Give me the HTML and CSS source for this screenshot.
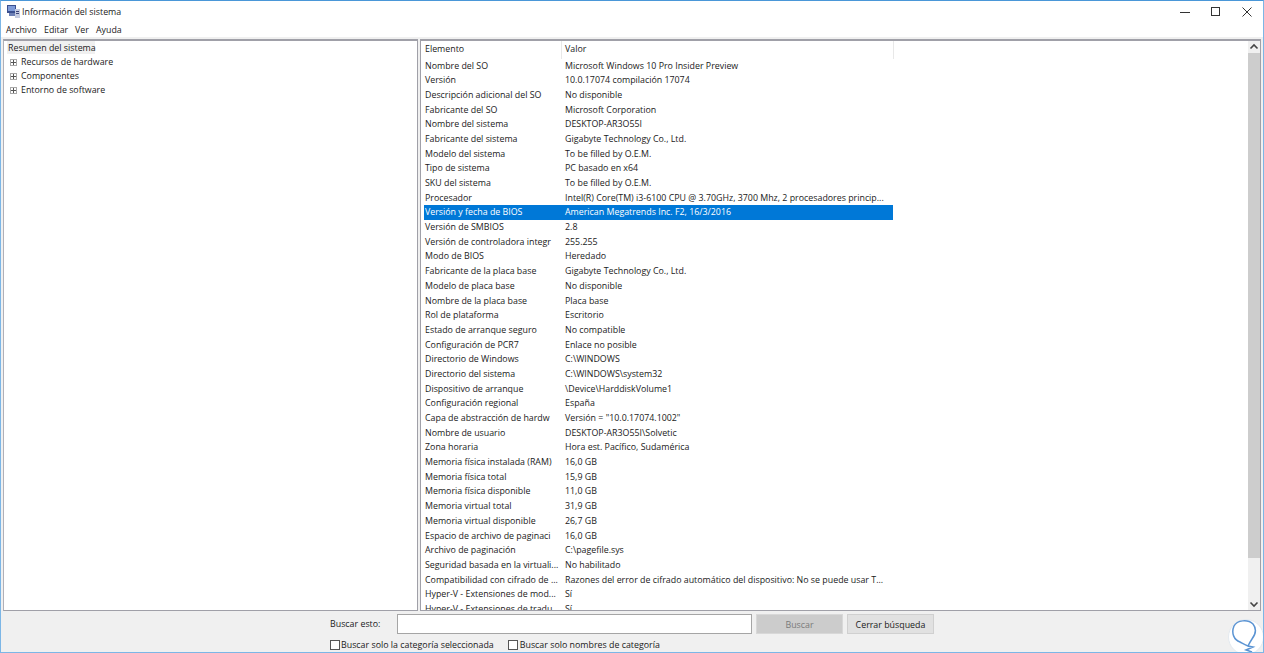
FILE: index.html
```html
<!DOCTYPE html>
<html lang="es">
<head>
<meta charset="utf-8">
<title>Información del sistema</title>
<link rel="stylesheet" href="styles.css">
</head>
<body>
<div class="window">
  <header class="titlebar">
    <svg class="appicon" width="16" height="16" viewBox="0 0 16 16"><rect x="1" y="1" width="9" height="8" fill="#3a4f8f"/><rect x="2" y="2" width="7" height="5" fill="#7f9bd8"/><rect x="3" y="9" width="10" height="3" fill="#6c7fb5"/><path d="M9 5h5v9H9z" fill="#c4cbe0"/><path d="M10 7h3v1h-3zM10 9h3v1h-3z" fill="#39427a"/></svg>
    <span class="title">Información del sistema</span>
    <div class="controls">
      <svg width="10" height="10" viewBox="0 0 10 10"><path d="M0 5.5h10" stroke="#333" fill="none"/></svg>
      <svg width="10" height="10" viewBox="0 0 10 10"><rect x=".5" y=".5" width="8" height="8" stroke="#333" stroke-width="1" fill="none"/></svg>
      <svg width="10" height="10" viewBox="0 0 10 10"><path d="M.5.5l9 9M9.5.5l-9 9" stroke="#333" fill="none"/></svg>
    </div>
  </header>
  <nav class="menubar"><span class="m1">Archivo</span><span class="m2">Editar</span><span class="m3">Ver</span><span>Ayuda</span></nav>
  <main class="panes">
    <section class="tree">
      <div class="tree-root">Resumen del sistema</div>
      <div class="tree-item"><span class="plus"></span>Recursos de hardware</div>
      <div class="tree-item"><span class="plus"></span>Componentes</div>
      <div class="tree-item"><span class="plus"></span>Entorno de software</div>
    </section>
    <section class="details">
      <div class="list">
        <div class="head"><div class="c1">Elemento</div><div class="c2">Valor</div></div>
        <div class="rows" id="rows">
          <div class="row"><div class="c1">Nombre del SO</div><div class="c2">Microsoft Windows 10 Pro Insider Preview</div></div>
          <div class="row"><div class="c1">Versión</div><div class="c2">10.0.17074 compilación 17074</div></div>
          <div class="row"><div class="c1">Descripción adicional del SO</div><div class="c2">No disponible</div></div>
          <div class="row"><div class="c1">Fabricante del SO</div><div class="c2">Microsoft Corporation</div></div>
          <div class="row"><div class="c1">Nombre del sistema</div><div class="c2">DESKTOP-AR3O55I</div></div>
          <div class="row"><div class="c1">Fabricante del sistema</div><div class="c2">Gigabyte Technology Co., Ltd.</div></div>
          <div class="row"><div class="c1">Modelo del sistema</div><div class="c2">To be filled by O.E.M.</div></div>
          <div class="row"><div class="c1">Tipo de sistema</div><div class="c2">PC basado en x64</div></div>
          <div class="row"><div class="c1">SKU del sistema</div><div class="c2">To be filled by O.E.M.</div></div>
          <div class="row"><div class="c1">Procesador</div><div class="c2">Intel(R) Core(TM) i3-6100 CPU @ 3.70GHz, 3700 Mhz, 2 procesadores princip...</div></div>
          <div class="row selected"><div class="c1">Versión y fecha de BIOS</div><div class="c2">American Megatrends Inc. F2, 16/3/2016</div></div>
          <div class="row"><div class="c1">Versión de SMBIOS</div><div class="c2">2.8</div></div>
          <div class="row"><div class="c1">Versión de controladora integr</div><div class="c2">255.255</div></div>
          <div class="row"><div class="c1">Modo de BIOS</div><div class="c2">Heredado</div></div>
          <div class="row"><div class="c1">Fabricante de la placa base</div><div class="c2">Gigabyte Technology Co., Ltd.</div></div>
          <div class="row"><div class="c1">Modelo de placa base</div><div class="c2">No disponible</div></div>
          <div class="row"><div class="c1">Nombre de la placa base</div><div class="c2">Placa base</div></div>
          <div class="row"><div class="c1">Rol de plataforma</div><div class="c2">Escritorio</div></div>
          <div class="row"><div class="c1">Estado de arranque seguro</div><div class="c2">No compatible</div></div>
          <div class="row"><div class="c1">Configuración de PCR7</div><div class="c2">Enlace no posible</div></div>
          <div class="row"><div class="c1">Directorio de Windows</div><div class="c2">C:\WINDOWS</div></div>
          <div class="row"><div class="c1">Directorio del sistema</div><div class="c2">C:\WINDOWS\system32</div></div>
          <div class="row"><div class="c1">Dispositivo de arranque</div><div class="c2">\Device\HarddiskVolume1</div></div>
          <div class="row"><div class="c1">Configuración regional</div><div class="c2">España</div></div>
          <div class="row"><div class="c1">Capa de abstracción de hardw</div><div class="c2">Versión = "10.0.17074.1002"</div></div>
          <div class="row"><div class="c1">Nombre de usuario</div><div class="c2">DESKTOP-AR3O55I\Solvetic</div></div>
          <div class="row"><div class="c1">Zona horaria</div><div class="c2">Hora est. Pacífico, Sudamérica</div></div>
          <div class="row"><div class="c1">Memoria física instalada (RAM)</div><div class="c2">16,0 GB</div></div>
          <div class="row"><div class="c1">Memoria física total</div><div class="c2">15,9 GB</div></div>
          <div class="row"><div class="c1">Memoria física disponible</div><div class="c2">11,0 GB</div></div>
          <div class="row"><div class="c1">Memoria virtual total</div><div class="c2">31,9 GB</div></div>
          <div class="row"><div class="c1">Memoria virtual disponible</div><div class="c2">26,7 GB</div></div>
          <div class="row"><div class="c1">Espacio de archivo de paginaci</div><div class="c2">16,0 GB</div></div>
          <div class="row"><div class="c1">Archivo de paginación</div><div class="c2">C:\pagefile.sys</div></div>
          <div class="row"><div class="c1">Seguridad basada en la virtuali...</div><div class="c2">No habilitado</div></div>
          <div class="row"><div class="c1">Compatibilidad con cifrado de ...</div><div class="c2">Razones del error de cifrado automático del dispositivo: No se puede usar T...</div></div>
          <div class="row"><div class="c1">Hyper-V - Extensiones de mod...</div><div class="c2">Sí</div></div>
          <div class="row"><div class="c1">Hyper-V - Extensiones de tradu...</div><div class="c2">Sí</div></div>
        </div>
      </div>
      <div class="scrollbar">
        <svg class="arrow" width="12" height="12" viewBox="0 0 12 12"><path d="M2.5 7.5L6 4l3.5 3.5" stroke="#444" stroke-width="1.6" fill="none"/></svg>
        <div class="thumb"></div>
        <svg class="arrow" width="12" height="12" viewBox="0 0 12 12"><path d="M2.5 4.5L6 8l3.5-3.5" stroke="#444" stroke-width="1.6" fill="none"/></svg>
      </div>
    </section>
  </main>
  <footer class="search">
    <div class="search-row">
      <label class="search-label" for="q">Buscar esto:</label>
      <input id="q" class="search-input" type="text">
      <button class="btn disabled" type="button">Buscar</button>
      <button class="btn" type="button">Cerrar búsqueda</button>
    </div>
    <div class="check-row">
      <span class="check"><span class="box"></span>Buscar solo la categoría seleccionada</span>
      <span class="check"><span class="box"></span>Buscar solo nombres de categoría</span>
    </div>
  </footer>
  <svg class="mark" width="35" height="35" viewBox="0 0 35 35"><circle cx="18" cy="19" r="17.5" fill="#fff" stroke="#e3e9ef"/><path d="M12 24C6 22 3 15 6 8 9 2 20 1 25 6c4 5 2 11-1 15-2 3-3 5-4 7-3-1-6-3-8-4zM20 28l5 1-7 3 6 2" fill="none" stroke="#5b94d3" stroke-width="1.5"/></svg>
</div>
</body>
</html>
```
FILE: styles.css
```css
* { box-sizing: border-box; }
html, body { margin: 0; height: 100%; overflow: hidden; }
body { font-family: "Open Sans", "Noto Sans", sans-serif; font-size: 8.85px; color: #1a1a1a; }
.window { position: relative; width: 1264px; height: 653px; background: #f0f0f0; display: flex; flex-direction: column; border: 1px solid #7cb6e6; border-top-color: #4a97d8; overflow: hidden; }
.titlebar { height: 21px; background: #fff; display: flex; align-items: center; padding-left: 5px; flex: none; }
.appicon { flex: none; }
.controls { margin-left: auto; display: flex; gap: 21px; padding-right: 11px; }
.menubar { height: 15px; background: #fff; display: flex; padding-left: 5px; align-items: center; flex: none; }
.m1 { width: 38px; }
.m2 { width: 31px; }
.m3 { width: 21px; }
.panes { height: 574px; padding: 2px 2px 0 2px; display: flex; gap: 2px; flex: none; }
.tree { width: 415px; background: #fff; border: 1px solid #a0a0a8; border-top-width: 2px; border-left-color: #b0b0b8; padding: 0 0 0 3px; }
.tree-root { height: 13px; line-height: 14px; background: #f0f0f0; width: 88px; margin-bottom: 1px; padding-left: 1px; white-space: nowrap; }
.tree-item { height: 14px; line-height: 14px; display: flex; align-items: center; }
.plus { width: 7px; height: 7px; border: 1px solid #a8a8a8; margin: 0 4px 0 3px; background: linear-gradient(#555,#555) center/5px 1px no-repeat, linear-gradient(#555,#555) center/1px 5px no-repeat; }
.details { width: 841px; background: #fff; border: 1px solid #a0a0a8; border-top-width: 2px; display: flex; }
.list { flex: 1; min-width: 0; overflow: hidden; padding-left: 3px; }
.head { display: flex; height: 17.5px; line-height: 16px; width: 470px; }
.head .c1 { width: 137px; padding-left: 1px; }
.head .c2 { width: 333px; border-right: 1px solid #e8e8e8; border-left: 1px solid #e8e8e8; padding-left: 3px; }
.row { display: flex; height: 14.69px; line-height: 14.69px; width: 469px; white-space: nowrap; }
.row .c1 { width: 137px; padding-left: 1px; overflow: hidden; }
.row .c2 { width: 332px; padding-left: 4px; overflow: hidden; }
.selected { background: #0078d7; color: #fff; }
.scrollbar { width: 12px; background: #f0f0f0; display: flex; flex-direction: column; flex: none; }
.arrow { flex: none; }
.thumb { height: 505px; background: #cdcdcd; flex: none; }
.scrollbar .arrow:last-child { margin-top: auto; }
.search { flex: 1; display: flex; flex-direction: column; }
.search-row { display: flex; align-items: center; padding: 2px 0 0 329px; height: 24px; line-height: 15px; }
.search-label { width: 67px; padding-top: 1px; }
.search-input { width: 355px; height: 20px; border: 1px solid #a5a5a5; background: #fff; padding: 0; margin: 0; }
.btn { width: 87px; height: 20px; border: 1px solid #d0d0d0; background: #e1e1e1; font: inherit; color: #1a1a1a; padding: 2px 0 0; margin: 0 0 0 4px; }
.btn.disabled { background: #cccccc; border-color: #d8d8d8; color: #7a7a7a; }
.check-row { display: flex; padding: 2px 0 0 329px; gap: 14px; height: 17px; align-items: center; }
.check { display: flex; align-items: center; }
.box { width: 10px; height: 10px; border: 1px solid #555; background: #fff; margin-right: 1px; }
.check + .check .box { margin-right: 2px; }
.mark { position: absolute; right: 0; bottom: -1px; }
```
